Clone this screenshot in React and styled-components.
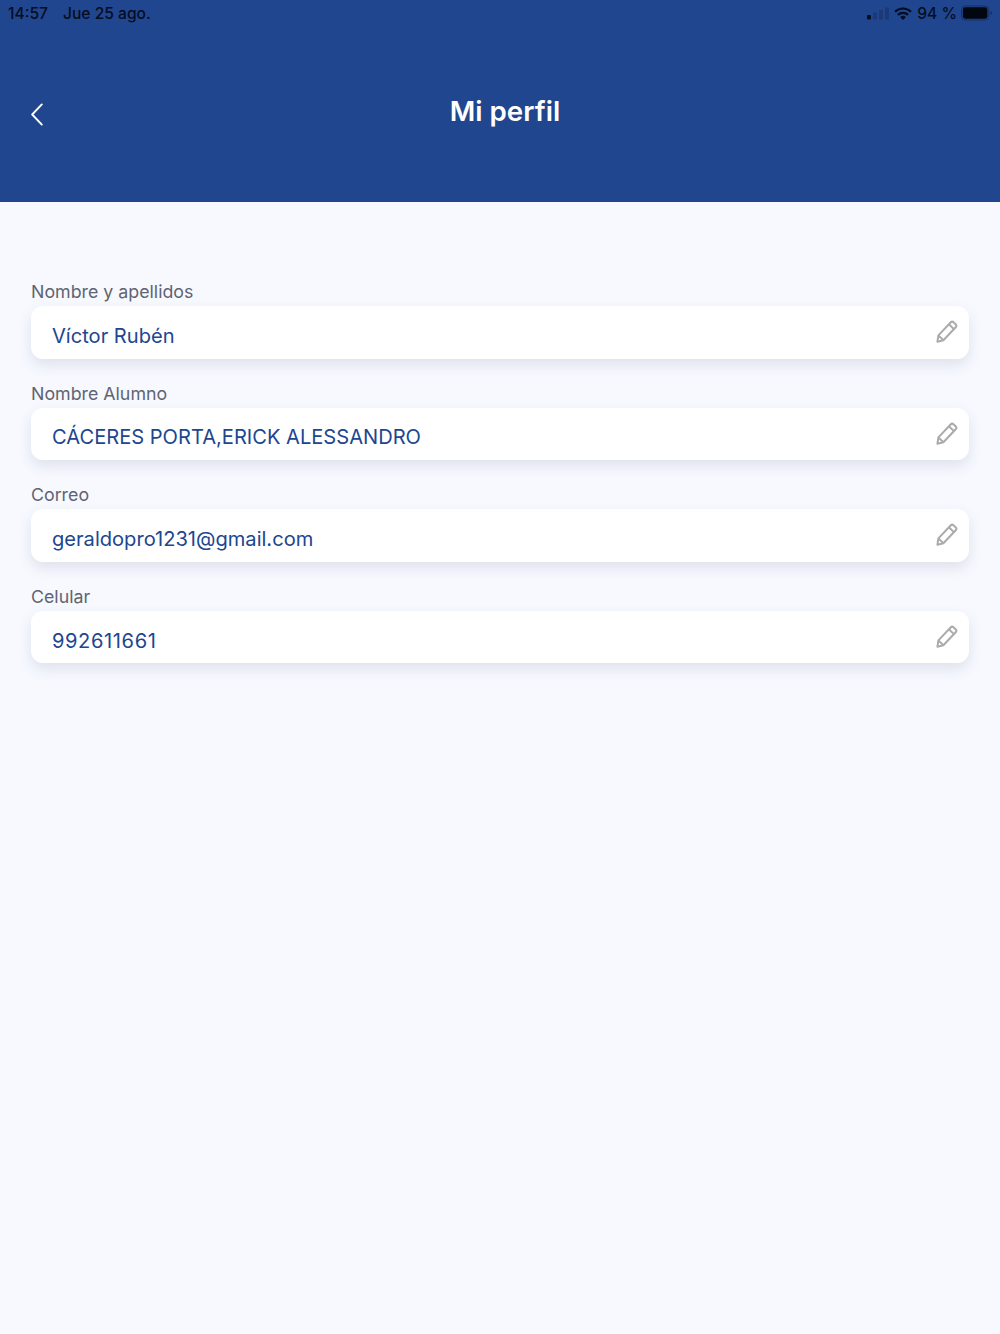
import React from 'react'
import styled, { createGlobalStyle } from 'styled-components'

const fields = [
  { label: 'Nombre y apellidos', value: 'Víctor Rubén' },
  { label: 'Nombre Alumno', value: 'CÁCERES PORTA,ERICK ALESSANDRO' },
  { label: 'Correo', value: 'geraldopro1231@gmail.com' },
  { label: 'Celular', value: '992611661', tracking: 0.6 },
]

const App = () => {
  return (
    <Pagina>
      <GlobalStyle />
      <Cabecera>
        <BarraEstado>
          <EstadoGrupo>
            <span>14:57</span>
            <span>Jue 25 ago.</span>
          </EstadoGrupo>
          <EstadoDerecha>
            <Senal viewBox="0 0 22 12">
              <rect x="0" y="7.5" width="4" height="4.5" rx="1" fill="#050d20" />
              <rect x="6" y="5" width="4" height="7" rx="1" fill="#050d20" opacity=".22" />
              <rect x="12" y="2.5" width="4" height="9.5" rx="1" fill="#050d20" opacity=".22" />
              <rect x="18" y="0" width="4" height="12" rx="1" fill="#050d20" opacity=".22" />
            </Senal>
            <Wifi viewBox="0 0 18 13">
              <path d="M1 4.8a11.4 11.4 0 0 1 16 0" fill="none" stroke="#050d20" strokeWidth="2.2" />
              <path d="M3.9 7.9a7.2 7.2 0 0 1 10.2 0" fill="none" stroke="#050d20" strokeWidth="2.2" />
              <path d="M6.2 10.2a3.6 3.6 0 0 1 5.6 0L9 13z" fill="#050d20" />
            </Wifi>
            <span>94 %</span>
            <Bateria viewBox="0 0 34 16">
              <rect x=".5" y=".5" width="29" height="15" rx="4" fill="none" stroke="#050d20" strokeOpacity=".4" />
              <rect x="2" y="2" width="26" height="12" rx="2.5" fill="#02060f" />
              <path d="M31.5 6v4c.8-.3 1.3-1.1 1.3-2s-.5-1.7-1.3-2z" fill="#050d20" opacity=".5" />
            </Bateria>
          </EstadoDerecha>
        </BarraEstado>
        <Navegacion>
          <Volver viewBox="0 0 16 28">
            <path d="M13.5 2.5 2.5 14l11 11.5" fill="none" stroke="#fff" strokeWidth="2.2" strokeLinecap="round" strokeLinejoin="round" />
          </Volver>
          <Titulo>Mi perfil</Titulo>
        </Navegacion>
      </Cabecera>
      <Formulario>
        {fields.map((f) => (
          <Campo key={f.label}>
            <Etiqueta>{f.label}</Etiqueta>
            <Tarjeta>
              <Valor $tracking={f.tracking}>{f.value}</Valor>
              <Lapiz viewBox="0 0 24 24">
                <path d="M3.4 16.4 15.6 3.5a2.2 2.2 0 0 1 3.1-.1l1.9 1.8a2.2 2.2 0 0 1 .1 3.1L8.4 21.2l-6 1.6z" fill="none" stroke="#ababab" strokeWidth="2" strokeLinejoin="round" />
                <path d="m13.9 5.3 5 4.8M3.4 16.4l5 4.8" fill="none" stroke="#ababab" strokeWidth="2" />
              </Lapiz>
            </Tarjeta>
          </Campo>
        ))}
      </Formulario>
    </Pagina>
  )
}

const GlobalStyle = createGlobalStyle`
  html, body {
    margin: 0;
    padding: 0;
    background: #f7f9ff;
  }
  * {
    box-sizing: border-box;
  }
`

const Pagina = styled.div`
  width: 1000px;
  height: 1334px;
  overflow: hidden;
  background: #f7f9ff;
  font-family: Inter, "Liberation Sans", sans-serif;
`

const Cabecera = styled.header`
  height: 202px;
  background: #20468f;
  display: flex;
  flex-direction: column;
`

const BarraEstado = styled.div`
  height: 26px;
  padding: 0 7px 0 8px;
  display: flex;
  align-items: center;
  justify-content: space-between;
  font-size: 15.6px;
  font-weight: 500;
  color: #050d20;
`

const EstadoGrupo = styled.div`
  display: flex;
  gap: 15px;
`

const EstadoDerecha = styled.div`
  display: flex;
  align-items: center;
  gap: 5px;
`

const Senal = styled.svg`
  width: 22px;
  height: 13px;
`

const Wifi = styled.svg`
  width: 18px;
  height: 13px;
`

const Bateria = styled.svg`
  width: 32px;
  height: 16px;
  margin-left: -1px;
`

const Navegacion = styled.div`
  height: 170px;
  padding-left: 30px;
  display: flex;
  align-items: center;
  position: relative;
`

const Volver = styled.svg`
  width: 14px;
  height: 25px;
  margin-top: 6px;
`

const Titulo = styled.h1`
  position: absolute;
  left: 0;
  right: -10px;
  margin: 0;
  text-align: center;
  font-size: 27.7px;
  font-weight: 600;
  color: #fff;
`

const Formulario = styled.main`
  padding: 79px 31px 0;
  display: flex;
  flex-direction: column;
  gap: 24px;
`

const Campo = styled.section`
  display: flex;
  flex-direction: column;
  gap: 3px;
`

const Etiqueta = styled.label`
  font-size: 17.8px;
  line-height: 22px;
  color: #5f6472;
`

const Tarjeta = styled.div`
  height: 52.6px;
  padding: 7px 10px 0 21px;
  background: #fff;
  border-radius: 12px;
  box-shadow: 0 6px 14px rgba(60, 70, 110, 0.13);
  display: flex;
  align-items: center;
  justify-content: space-between;
`

const Valor = styled.span`
  font-size: 20.1px;
  letter-spacing: ${(props) => props.$tracking || 0}px;
  color: #20468f;
`

const Lapiz = styled.svg`
  width: 24px;
  height: 24px;
  margin-top: -9px;
`

export default App
